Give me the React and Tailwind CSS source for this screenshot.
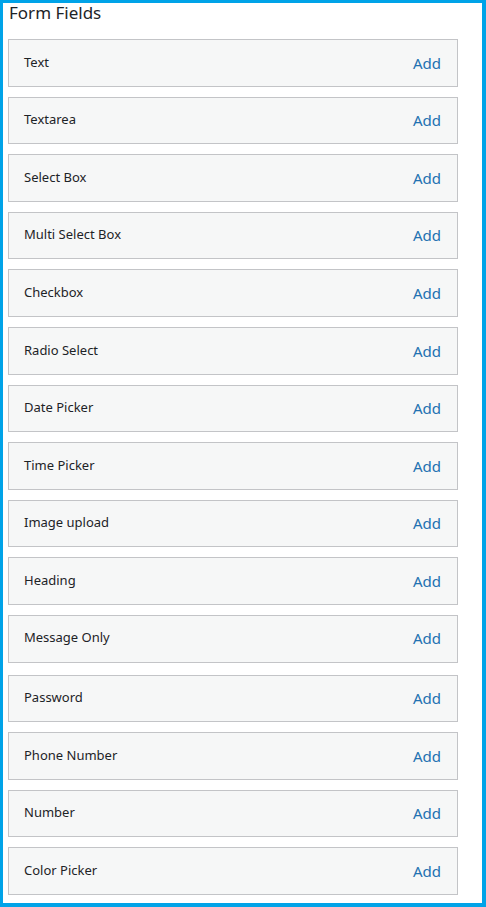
import React from "react";

const fields = [
  "Text",
  "Textarea",
  "Select Box",
  "Multi Select Box",
  "Checkbox",
  "Radio Select",
  "Date Picker",
  "Time Picker",
  "Image upload",
  "Heading",
  "Message Only",
  "Password",
  "Phone Number",
  "Number",
  "Color Picker",
];

export default function App() {
  return (
    <div
      className="w-[486px] h-[907px] bg-white border-[#00a3e8] border-t-[3px] border-l-[3px] border-r-4 border-b-4 overflow-hidden"
      style={{ fontFamily: '"Noto Sans", "Open Sans", sans-serif' }}
    >
      <div className="pl-[5px] pr-[24px]">
        <h2 className="text-[17px] leading-[20px] text-[#1d2327] font-normal pl-[1px]">
          Form Fields
        </h2>
        <div className="mt-[16px] flex flex-col gap-[10px]">
          {fields.map((f) => (
            <div
              key={f}
              className={
                "h-[47.6px] flex items-center justify-between bg-[#f6f7f7] border border-[#c3c4c7] pl-[15px] pr-[16px]" +
                (f === "Password" ? " mt-[2px]" : "")
              }
            >
              <span className="text-[13px] text-[#1d2327] pb-[1px]">{f}</span>
              <span className="text-[15px] text-[#2271b1]">Add</span>
            </div>
          ))}
        </div>
      </div>
    </div>
  );
}
